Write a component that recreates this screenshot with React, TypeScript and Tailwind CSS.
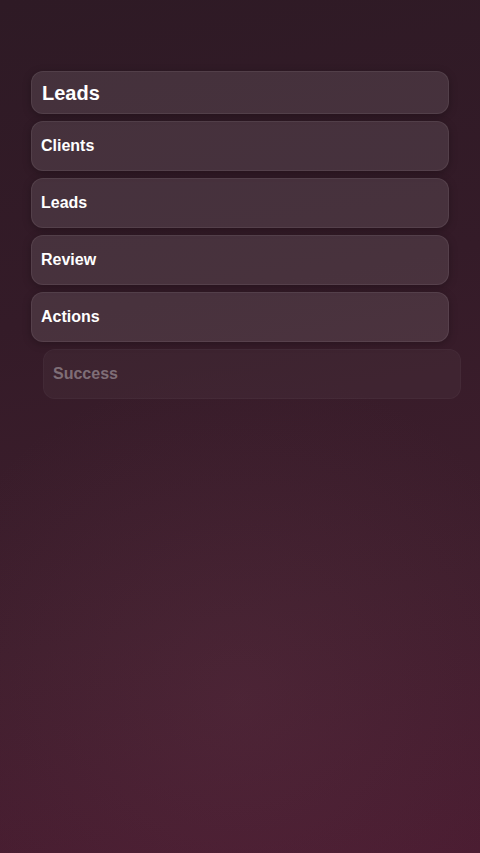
export default function App() {
  const items = ["Clients", "Leads", "Review", "Actions"];
  return (
    <div
      className="relative min-h-[853px] w-full overflow-hidden bg-[#3a1d2b]"
      style={{ fontFamily: '"Liberation Sans", Arial, sans-serif' }}
    >
      {/* backdrop */}
      <div className="absolute inset-0 bg-[linear-gradient(170deg,#2e1a25_0%,#341b28_35%,#3f1e2d_70%,#4a1c31_100%)]" />
      <div className="absolute inset-0 bg-[radial-gradient(circle_at_50%_82%,rgba(110,60,80,0.22)_0%,transparent_45%)]" />

      <div className="relative flex flex-col gap-[7px] px-[31px] pt-[71px]">
        <div className="flex h-[43px] items-center rounded-xl border border-white/[0.07] bg-white/10 px-[10px] shadow-[0_2px_8px_rgba(0,0,0,0.25)]">
          <span className="text-[20px] font-bold text-white">Leads</span>
        </div>
        {items.map((label) => (
          <div
            key={label}
            className="flex h-[50px] items-center rounded-xl border border-white/[0.07] bg-white/10 px-[9px] shadow-[0_2px_8px_rgba(0,0,0,0.25)]"
          >
            <span className="text-[16px] font-bold text-white">{label}</span>
          </div>
        ))}
        <div className="ml-[12px] -mr-[12px] flex h-[50px] items-center rounded-xl border border-white/[0.03] bg-white/[0.035] px-[9px]">
          <span className="text-[16px] font-bold text-white/35">Success</span>
        </div>
      </div>
    </div>
  );
}
